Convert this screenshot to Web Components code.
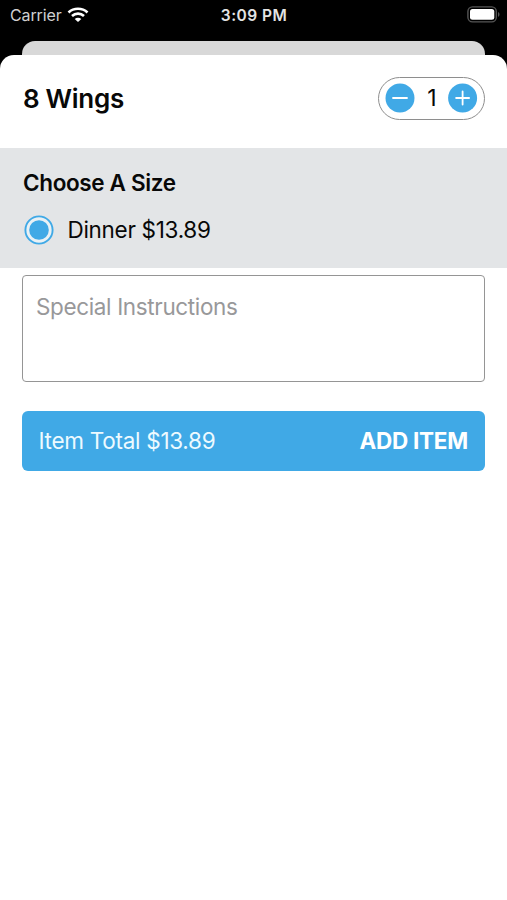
<!DOCTYPE html>
<html lang="en">
<head>
<meta charset="utf-8">
<title>8 Wings</title>
<style>
html,body{margin:0;height:100%;background:#000;overflow:hidden}
body{font-family:Inter,"Liberation Sans",sans-serif;color:#080808;--blue:#40a9e6}
</style>
</head>
<body>
<item-screen></item-screen>
<script>
const define = (name, html) => customElements.define(name, class extends HTMLElement {
  constructor() {
    super();
    this.attachShadow({ mode: "open" }).innerHTML = html;
  }
});

define("status-bar", `
<style>
:host{display:grid;grid-template-columns:1fr auto 1fr;align-items:center;height:30px;box-sizing:border-box;padding:0 7px 0 10px;font-size:16px;line-height:20px;color:#e4e4e4}
.left{display:flex;align-items:center;gap:5.5px}
.carrier{letter-spacing:-.12px;color:#d0d0d0}
.time{font-weight:600;font-size:15.5px;letter-spacing:.45px;padding-top:1px;margin-left:-2px}
.battery{justify-self:end;margin-top:-2px}
svg{display:block}
</style>
<div class="left"><span class="carrier">Carrier</span>
<svg width="22" height="16" viewBox="0 0 22 16" fill="none" stroke="#fff" stroke-width="2.7"><path d="M1.5 5.4C6.8.5 15.2.5 20.5 5.4"/><path d="M5 9C8.5 5.8 13.5 5.8 17 9"/><path d="M11 15 7.7 11.9C9.5 10.2 12.5 10.2 14.3 11.9Z" fill="#fff" stroke="none"/></svg></div>
<span class="time">3:09 PM</span>
<svg class="battery" width="33" height="17" viewBox="0 0 33 17"><rect x=".9" y=".9" width="28.4" height="15" rx="4.6" fill="none" stroke="#555" stroke-width="1.4"/><rect x="3" y="3" width="24.3" height="10.8" rx="2.5" fill="#fff"/><path d="M31 6c2 .8 2 4 0 4.8Z" fill="#555"/></svg>`);

define("quantity-stepper", `
<style>
:host{display:flex;align-items:center;justify-content:space-between;box-sizing:border-box;width:107px;height:43px;padding:0 6px;border:1.5px solid #8e8e8e;border-radius:22px}
svg{display:block}
span{font-size:23px;line-height:28px;padding-left:1px}
</style>
<svg width="30" height="30" viewBox="0 0 30 30"><circle cx="15" cy="15" r="14.5" fill="var(--blue)"/><path d="M8 15h14" stroke="#fff" stroke-width="1.8" stroke-linecap="round"/></svg>
<span><slot></slot></span>
<svg width="30" height="30" viewBox="0 0 30 30"><circle cx="14.6" cy="15" r="14.5" fill="var(--blue)"/><path d="M8.1 15h13M14.6 8.5v13" stroke="#fff" stroke-width="1.8" stroke-linecap="round"/></svg>`);

define("item-header", `
<style>
:host{display:flex;justify-content:space-between;align-items:center;box-sizing:border-box;height:93px;padding:0 22px 7px 23px}
h1{margin:0;padding-top:2px;font-size:26px;line-height:32px;font-weight:600;letter-spacing:-.3px}
</style>
<h1><slot></slot></h1><slot name="quantity"></slot>`);

define("size-option", `
<style>
:host{display:flex;align-items:center;gap:13.5px;font-size:22.5px;line-height:28px;letter-spacing:-.3px}
svg{display:block}
</style>
<svg width="30" height="30" viewBox="0 0 30 30"><circle cx="15" cy="15" r="13.6" fill="#e9f1f5" stroke="var(--blue)" stroke-width="1.9"/><circle cx="15" cy="15" r="9.8" fill="var(--blue)"/></svg>
<span><slot></slot></span>`);

define("size-section", `
<style>
:host{display:flex;flex-direction:column;box-sizing:border-box;height:120px;padding:21px 23px 0 23px;background:#e3e5e7;gap:18px}
h2{margin:0;font-size:22.5px;line-height:28px;font-weight:600;letter-spacing:-.36px}
::slotted(size-option){margin-left:1px}
</style>
<h2><slot name="title"></slot></h2><slot></slot>`);

define("instructions-field", `
<style>
:host{display:block;box-sizing:border-box;height:107px;margin:7px 22px 0;padding:17px 13px;border:1.5px solid #959595;border-radius:4px;font-size:22.5px;line-height:28px;color:#98989a;letter-spacing:-.36px}
</style><slot></slot>`);

define("add-button", `
<style>
:host{display:flex;justify-content:space-between;align-items:center;box-sizing:border-box;height:60px;margin:29px 22px 0;padding:0 17px 0 16.5px;border-radius:6px;background:var(--blue);color:#edfaff;font-size:22.5px;line-height:28px}
.total{letter-spacing:-.28px}
.action{font-weight:700;color:#fff;letter-spacing:-.25px}
</style><span class="total"><slot></slot></span><span class="action"><slot name="action"></slot></span>`);

define("item-screen", `
<style>
:host{display:flex;flex-direction:column;height:100vh;background:#000}
.behind{height:14px;margin:11px 22px 0;border-radius:13px 13px 0 0;background:#d8d8d8}
main{flex:1;background:#fff;border-radius:14px 14px 0 0}
</style>
<status-bar></status-bar>
<div class="behind"></div>
<main>
<item-header>8 Wings<quantity-stepper slot="quantity">1</quantity-stepper></item-header>
<size-section><span slot="title">Choose A Size</span><size-option>Dinner $13.89</size-option></size-section>
<instructions-field>Special Instructions</instructions-field>
<add-button>Item Total $13.89<span slot="action">ADD ITEM</span></add-button>
</main>`);
</script>
</body>
</html>
